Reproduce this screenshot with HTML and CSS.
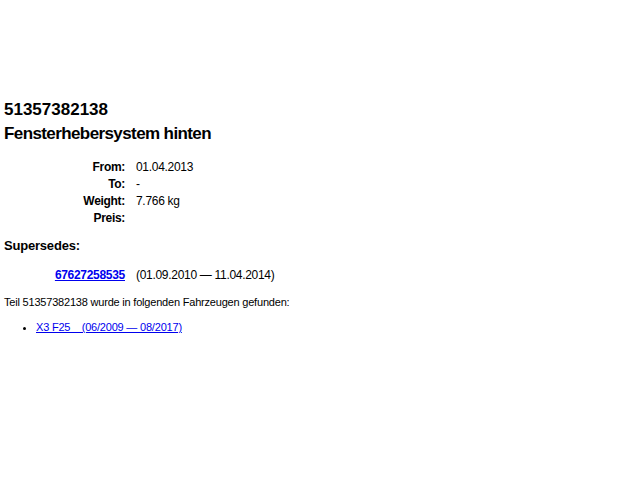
FILE: index.html
```html
<!DOCTYPE html>
<html>
<head>
<meta charset="utf-8">
<link rel="stylesheet" href="styles.css">
</head>
<body>
<div class="page">
  <h1 class="title">51357382138</h1>
  <h2 class="title name">Fensterhebersystem hinten</h2>
  <div class="info">
    <div class="label">From:</div><div class="value">01.04.2013</div>
    <div class="label">To:</div><div class="value">-</div>
    <div class="label">Weight:</div><div class="value">7.766 kg</div>
    <div class="label">Preis:</div><div class="value"></div>
  </div>
  <h3 class="sub">Supersedes:</h3>
  <div class="info supers">
    <div class="label"><a href="#" class="part">67627258535</a></div><div class="value">(01.09.2010 — 11.04.2014)</div>
  </div>
  <p class="note">Teil 51357382138 wurde in folgenden Fahrzeugen gefunden:</p>
  <ul class="cars">
    <li><a href="#">X3 F25&nbsp;&nbsp;&nbsp;&nbsp;(06/2009 — 08/2017)</a></li>
  </ul>
</div>
</body>
</html>
```
FILE: styles.css
```css
html, body { margin: 0; padding: 0; background: #fff; }
body { font-family: "Liberation Sans", Arial, sans-serif; color: #000; }
.page { padding: 100px 4px 0 4px; }
.title { font-size: 17px; font-weight: bold; margin: 0; line-height: 20px; }
h1.title { margin-bottom: 4px; }
.name { letter-spacing: -0.6px; }
.info {
  display: grid;
  grid-template-columns: 121px auto;
  column-gap: 11px;
  row-gap: 2px;
  margin-top: 16px;
  font-size: 12px;
  letter-spacing: -0.3px;
  line-height: 15px;
}
.label { text-align: right; font-weight: bold; }
.sub { font-size: 13px; font-weight: bold; margin: 12px 0 0 0; line-height: 16px; letter-spacing: -0.2px; }
.supers { margin-top: 14px; }
a { color: #0000ee; }
.part { font-weight: bold; }
.note { font-size: 11px; margin: 12px 0 0 0; line-height: 14px; letter-spacing: -0.2px; }
.cars { margin: 11px 0 0 0; padding-left: 32px; font-size: 11px; line-height: 14px; letter-spacing: -0.2px; }
```
